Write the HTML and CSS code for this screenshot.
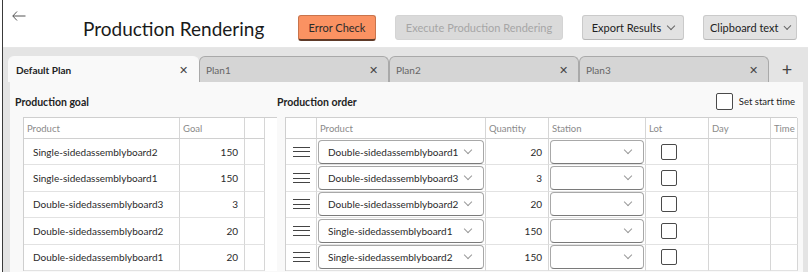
FILE: index.html
```html
<!DOCTYPE html>
<html lang="en">
<head>
  <meta charset="UTF-8">
  <title>Production Rendering</title>
  <link rel="stylesheet" href="styles.css">
</head>
<body>
  <div class="app">
    <!-- top bar -->
    <header class="topbar">
      <svg class="back" width="14" height="10" viewBox="0 0 14 10"><path d="M5 0.5 L0.8 5 L5 9.5 M0.8 5 H13.5" fill="none" stroke="#555" stroke-width="1"/></svg>
      <h1 class="title">Production Rendering</h1>
      <button class="btn btn-accent">Error Check</button>
      <button class="btn btn-disabled">Execute Production Rendering</button>
      <button class="btn btn-drop">Export Results <span class="chev"></span></button>
      <button class="btn btn-drop btn-clip">Clipboard text <span class="chev"></span></button>
    </header>

    <!-- tab strip -->
    <div class="tabs">
      <div class="tab active"><span>Default Plan</span><span class="close">✕</span></div>
      <div class="tab"><span>Plan1</span><span class="close">✕</span></div>
      <div class="tab"><span>Plan2</span><span class="close">✕</span></div>
      <div class="tab"><span>Plan3</span><span class="close">✕</span></div>
      <div class="add">+</div>
    </div>

    <div class="content">
      <section class="goal">
        <h2 class="section-title">Production goal</h2>
        <div class="grid grid-goal">
          <div class="hd">Product</div><div class="hd">Goal</div><div class="hd"></div>
          <div class="cell">Single-sidedassemblyboard2</div><div class="cell num">150</div><div class="cell"></div>
          <div class="cell">Single-sidedassemblyboard1</div><div class="cell num">150</div><div class="cell"></div>
          <div class="cell">Double-sidedassemblyboard3</div><div class="cell num">3</div><div class="cell"></div>
          <div class="cell">Double-sidedassemblyboard2</div><div class="cell num">20</div><div class="cell"></div>
          <div class="cell">Double-sidedassemblyboard1</div><div class="cell num">20</div><div class="cell"></div>
        </div>
      </section>

      <section class="order">
        <div class="order-head">
          <h2 class="section-title">Production order</h2>
          <label class="start"><span class="box big"></span>Set start time</label>
        </div>
        <div class="grid grid-order">
          <div class="hd"></div><div class="hd">Product</div><div class="hd">Quantity</div><div class="hd">Station</div><div class="hd">Lot</div><div class="hd">Day</div><div class="hd">Time</div>

          <div class="cell handle"><i></i><i></i><i></i></div>
          <div class="cell pad"><div class="combo">Double-sidedassemblyboard1<span class="chev"></span></div></div>
          <div class="cell num">20</div>
          <div class="cell pad"><div class="combo"><span class="chev"></span></div></div>
          <div class="cell lot"><span class="box"></span></div>
          <div class="cell"></div><div class="cell"></div>

          <div class="cell handle"><i></i><i></i><i></i></div>
          <div class="cell pad"><div class="combo">Double-sidedassemblyboard3<span class="chev"></span></div></div>
          <div class="cell num">3</div>
          <div class="cell pad"><div class="combo"><span class="chev"></span></div></div>
          <div class="cell lot"><span class="box"></span></div>
          <div class="cell"></div><div class="cell"></div>

          <div class="cell handle"><i></i><i></i><i></i></div>
          <div class="cell pad"><div class="combo">Double-sidedassemblyboard2<span class="chev"></span></div></div>
          <div class="cell num">20</div>
          <div class="cell pad"><div class="combo"><span class="chev"></span></div></div>
          <div class="cell lot"><span class="box"></span></div>
          <div class="cell"></div><div class="cell"></div>

          <div class="cell handle"><i></i><i></i><i></i></div>
          <div class="cell pad"><div class="combo">Single-sidedassemblyboard1<span class="chev"></span></div></div>
          <div class="cell num">150</div>
          <div class="cell pad"><div class="combo"><span class="chev"></span></div></div>
          <div class="cell lot"><span class="box"></span></div>
          <div class="cell"></div><div class="cell"></div>

          <div class="cell handle"><i></i><i></i><i></i></div>
          <div class="cell pad"><div class="combo">Single-sidedassemblyboard2<span class="chev"></span></div></div>
          <div class="cell num">150</div>
          <div class="cell pad"><div class="combo"><span class="chev"></span></div></div>
          <div class="cell lot"><span class="box"></span></div>
          <div class="cell"></div><div class="cell"></div>
        </div>
      </section>
    </div>
  </div>
</body>
</html>
```

FILE: styles.css
```css
html, body {
  margin: 0;
  padding: 0;
  height: 272px;
  overflow: hidden;
}

body {
  font-family: Lato, "Noto Sans", sans-serif;
  color: #222;
  background: #fff;
}

.app {
  margin-left: 2px;
  border-left: 1px solid #3a3a3a;
  height: 272px;
  background: #e4e4e4;
  display: flex;
  flex-direction: column;
}

/* top bar */
.topbar {
  height: 48px;
  box-sizing: border-box;
  background: #fff;
  border-bottom: 1px solid #e6e6e6;
  display: flex;
  align-items: center;
  padding: 8px 0 0 9px;
  flex-shrink: 0;
}

.back {
  align-self: flex-start;
  margin-top: 3px;
}

.title {
  margin: 2px 0 0 57px;
  font-size: 19px;
  font-weight: 400;
  color: #1a1a1a;
  width: 215px;
  white-space: nowrap;
}

.btn {
  font-family: inherit;
  font-size: 11px;
  height: 26px;
  border-radius: 3px;
  padding: 0 6px;
  margin-right: 19px;
  display: flex;
  align-items: center;
  box-sizing: border-box;
  white-space: nowrap;
}

.btn-accent {
  width: 78px;
  justify-content: center;
  background: #fa9262;
  border: 1px solid #c8744c;
  border-bottom: 2px solid #5e3a28;
  color: #2a2a2a;
}

.btn-disabled {
  width: 168px;
  justify-content: center;
  background: #dadada;
  border: 1px solid #d4d4d4;
  color: #a6a6a6;
  height: 25px;
}

.btn-drop {
  width: 102px;
  justify-content: center;
  background: #e2e2e2;
  border: 1px solid #cacaca;
  border-bottom-color: #b8b8b8;
  color: #222;
  height: 25px;
  gap: 7px;
}

.btn-clip {
  width: 94px;
  margin-right: 0;
}

.chev {
  display: inline-block;
  width: 5px;
  height: 5px;
  border-right: 1px solid #666;
  border-bottom: 1px solid #666;
  transform: rotate(45deg);
  margin-top: -4px;
}

/* tabs */
.tabs {
  height: 34px;
  display: flex;
  align-items: flex-end;
  padding-left: 5px;
  flex-shrink: 0;
}

.tab {
  width: 190px;
  height: 26px;
  box-sizing: border-box;
  background: #d5d5d5;
  border: 1px solid #a9a9a9;
  border-bottom: none;
  border-radius: 6px 6px 0 0;
  display: flex;
  align-items: center;
  justify-content: space-between;
  padding: 0 10px 0 6px;
  font-size: 10px;
  color: #666;
}

.tab.active {
  width: 191px;
  background: #f9f9f9;
  border-color: #f9f9f9;
  font-weight: 700;
  color: #222;
  padding-left: 7px;
}

.close {
  font-size: 11px;
  font-weight: 400;
  color: #444;
}

.add {
  width: 36px;
  height: 26px;
  display: flex;
  align-items: center;
  justify-content: center;
  font-size: 18px;
  color: #444;
}

/* content */
.content {
  flex: 1;
  margin: 0 5px 0 7px;
  background: #f9f9f9;
  display: flex;
  padding-left: 5px;
}

.section-title {
  margin: 0;
  font-size: 10.5px;
  font-weight: 700;
  height: 22px;
  line-height: 22px;
  margin-top: 9px;
}

.goal {
  width: 262px;
}

.goal .grid {
  margin-left: 8px;
}

.order {
  width: 520px;
}

.order-head {
  display: flex;
  justify-content: space-between;
  align-items: flex-end;
}

.order .grid {
  margin-left: 8px;
}

.start {
  display: flex;
  align-items: center;
  gap: 6px;
  font-size: 9.5px;
  margin-bottom: 3px;
  margin-right: 2px;
}

.grid {
  display: grid;
  background: #fff;
  border-left: 1px solid #cfcfcf;
  border-top: 1px solid #cfcfcf;
  margin-top: 4px;
  grid-auto-rows: 26.4px;
  grid-template-rows: 21px;
}

.grid-goal {
  grid-template-columns: 156px 65px 20px;
}

.grid-order {
  grid-template-columns: 31px 169px 63px 97px 63px 62px 27px;
}

.hd, .cell {
  border-right: 1px solid #d6d6d6;
  border-bottom: 1px solid #e2e2e2;
  display: flex;
  align-items: center;
  white-space: nowrap;
  overflow: hidden;
  box-sizing: border-box;
}

.hd {
  font-size: 9.5px;
  color: #8a8a8a;
  padding-left: 3px;
  border-bottom-color: #d0d0d0;
}

.cell {
  font-size: 10px;
  color: #2a2a2a;
  padding-left: 9px;
}

.cell.num {
  justify-content: flex-end;
  padding-right: 6px;
}

.cell.pad {
  padding: 0 1px;
}

.combo {
  flex: 1;
  height: 24px;
  box-sizing: border-box;
  border: 1px solid #a8a8a8;
  border-bottom-color: #7a7a7a;
  border-radius: 4px;
  display: flex;
  align-items: center;
  padding: 0 12px 0 9px;
  font-size: 10px;
}

.combo .chev {
  border-color: #9a9a9a;
  margin-left: auto;
}

.handle {
  flex-direction: column;
  justify-content: center;
  align-items: flex-start;
  gap: 3.5px;
  padding-left: 7px;
}

.handle i {
  display: block;
  width: 17px;
  height: 1px;
  background: #444;
}

.lot {
  padding-left: 15px;
}

.box {
  width: 16px;
  height: 16px;
  box-sizing: border-box;
  border: 1px solid #4a4a4a;
  border-radius: 2px;
  background: #fff;
}

.box.big {
  width: 17px;
  height: 17px;
}
```
